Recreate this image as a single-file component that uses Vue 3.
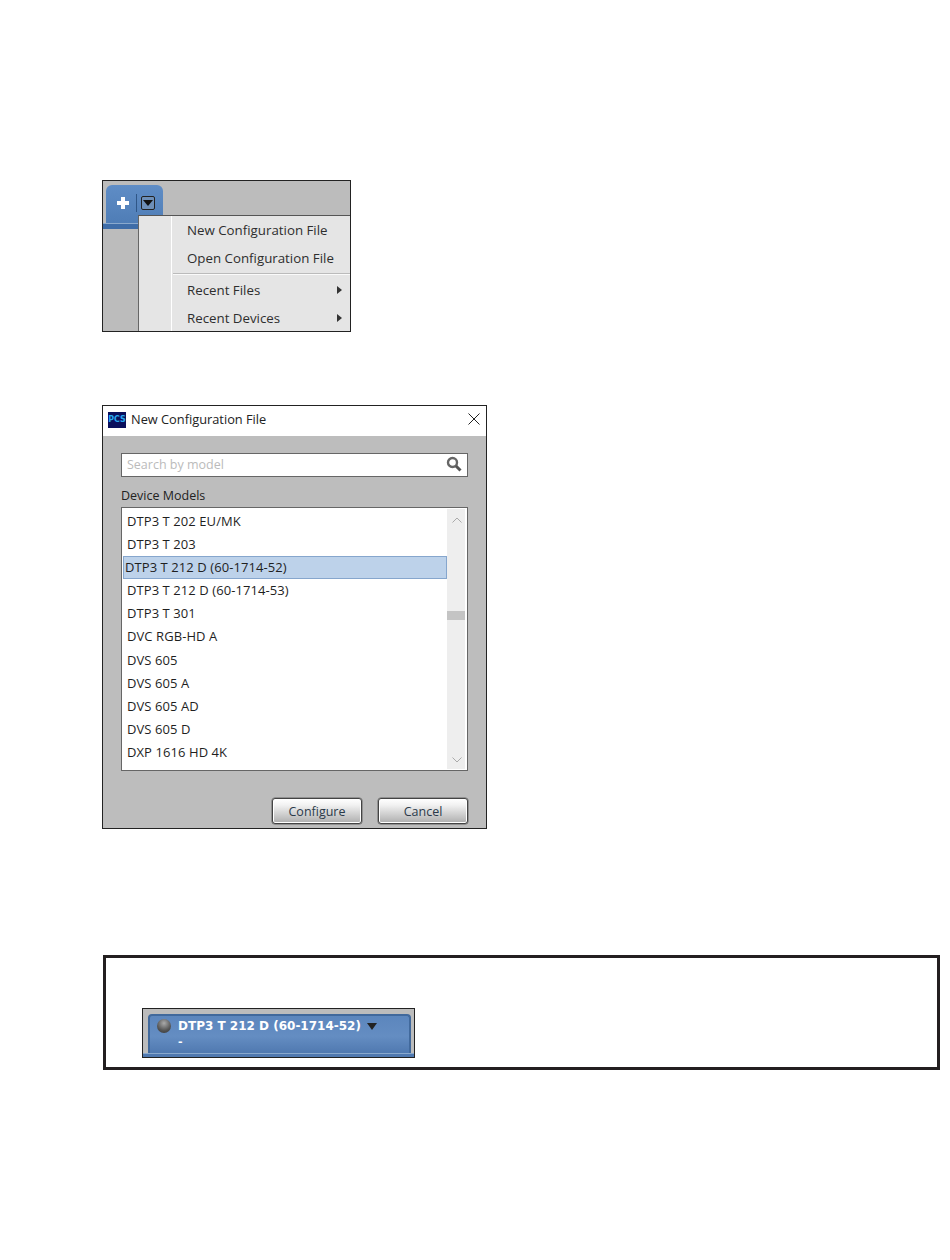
<template>
  <div class="page">
    <!-- add menu -->
    <div class="shot menu-shot">
      <div class="tab">
        <span class="plus"></span>
        <span class="tab-sep"></span>
        <span class="drop-btn"><i class="tri"></i></span>
      </div>
      <div class="tab-line"></div>
      <div class="menu">
        <div class="menu-item">New Configuration File</div>
        <div class="menu-item">Open Configuration File</div>
        <div class="menu-sep"></div>
        <div class="menu-item sub">Recent Files<i class="arrow"></i></div>
        <div class="menu-item sub">Recent Devices<i class="arrow"></i></div>
      </div>
    </div>

    <!-- dialog -->
    <div class="dialog">
      <div class="title-bar">
        <span class="pcs">PCS</span>
        <span class="title">New Configuration File</span>
        <svg class="close" width="12" height="12" viewBox="0 0 12 12">
          <path d="M.5.5l11 11M11.5.5l-11 11" stroke="#222" fill="none" />
        </svg>
      </div>
      <div class="dialog-body">
        <div class="search">
          <span class="placeholder">Search by model</span>
          <svg class="glass" width="16" height="16" viewBox="0 0 16 16">
            <circle cx="6.5" cy="6.5" r="4.5" fill="#fff" stroke="#666" stroke-width="2.4" />
            <path d="M10 10l4.5 4.5" stroke="#555" stroke-width="3" />
          </svg>
        </div>
        <div class="label">Device Models</div>
        <div class="list">
          <div class="rows">
            <div v-for="m in models" :key="m.name" class="row" :class="{ selected: m.selected }">{{ m.name }}</div>
          </div>
          <div class="scrollbar">
            <svg class="chev" width="10" height="6" viewBox="0 0 10 6">
              <path d="M.5 5.500L5 1l4.500 4.500" stroke="#aaa" fill="none" />
            </svg>
            <div class="thumb"></div>
            <svg class="chev" width="10" height="6" viewBox="0 0 10 6">
              <path d="M.5.5L5 5 9.500.5" stroke="#aaa" fill="none" />
            </svg>
          </div>
        </div>
        <div class="buttons">
          <button class="btn">Configure</button>
          <button class="btn">Cancel</button>
        </div>
      </div>
    </div>

    <!-- note box -->
    <div class="note">
      <div class="strip">
        <div class="device-tab">
          <div class="device-line">
            <span class="led"></span>
            <span class="device-name">DTP3 T 212 D (60-1714-52)</span>
            <i class="device-tri"></i>
          </div>
          <div class="device-sub">-</div>
        </div>
        <div class="device-bar"></div>
      </div>
    </div>
  </div>
</template>

<script setup>
const models = [
  { name: 'DTP3 T 202 EU/MK' },
  { name: 'DTP3 T 203' },
  { name: 'DTP3 T 212 D (60-1714-52)', selected: true },
  { name: 'DTP3 T 212 D (60-1714-53)' },
  { name: 'DTP3 T 301' },
  { name: 'DVC RGB-HD A' },
  { name: 'DVS 605' },
  { name: 'DVS 605 A' },
  { name: 'DVS 605 AD' },
  { name: 'DVS 605 D' },
  { name: 'DXP 1616 HD 4K' },
]
</script>

<style>
html, body {
  background: #fff;
}
</style>

<style scoped>
.page {
  width: 950px;
  height: 1260px;
  box-sizing: border-box;
  padding: 180px 0 0 102px;
  font-family: "Open Sans", "Liberation Sans", sans-serif;
  color: #222;
  overflow: hidden;
}

/* add menu */
.shot {
  position: relative;
  box-sizing: border-box;
  border: 1px solid #222;
  background: #bcbcbc;
}
.menu-shot {
  width: 249px;
  height: 152px;
  overflow: hidden;
}
.tab {
  width: 57px;
  height: 38px;
  margin: 4px 0 0 3px;
  box-sizing: border-box;
  padding: 0 0 3px 0;
  border-radius: 6px 6px 0 0;
  background: linear-gradient(#5f8dc6, #4f7db6);
  display: flex;
  align-items: center;
}
.plus {
  width: 12px;
  height: 12px;
  margin-left: 11px;
  background:
    linear-gradient(#fff, #fff) center / 12px 4px no-repeat,
    linear-gradient(#fff, #fff) center / 4px 12px no-repeat;
}
.tab-sep {
  width: 1px;
  height: 18px;
  margin-left: 7px;
  background: #2f5687;
}
.drop-btn {
  width: 14px;
  height: 14px;
  margin-left: 4px;
  box-sizing: border-box;
  border: 1px solid #222;
  border-radius: 2px;
  background: #6d8fb8;
  display: flex;
  align-items: center;
  justify-content: center;
}
.tri {
  border-style: solid;
  border-width: 6px 5px 0;
  border-color: #111 transparent transparent;
}
.tab-line {
  height: 6px;
  box-sizing: border-box;
  border-top: 1px solid #8aa9cd;
  background: #3f6da8;
}
.menu {
  position: absolute;
  left: 35px;
  top: 34px;
  width: 213px;
  height: 120px;
  box-sizing: border-box;
  border-top: 1px solid #555;
  border-left: 1px solid #666;
  padding: 0 0 0 33px;
  background: linear-gradient(90deg, #e5e5e5 32px, #fff 32px, #fff 33px, #e5e5e5 33px);
  font-size: 13.3px;
}
.menu-item {
  position: relative;
  height: 28px;
  line-height: 28px;
  padding-left: 15px;
  color: #2e2e2e;
}
.menu-sep {
  height: 2px;
  margin: 1px 0 1px 1px;
  background: #fafafa;
  border-top: 1px solid #bbb;
  box-sizing: border-box;
}
.arrow {
  position: absolute;
  right: 9px;
  top: 10px;
  border-style: solid;
  border-width: 4px 0 4px 5px;
  border-color: transparent transparent transparent #333;
}

/* dialog */
.dialog {
  width: 385px;
  height: 424px;
  margin-top: 73px;
  box-sizing: border-box;
  border: 1px solid #222;
  background: #bdbdbd;
  display: flex;
  flex-direction: column;
}
.title-bar {
  height: 30px;
  flex: none;
  box-sizing: border-box;
  background: #fff;
  display: flex;
  align-items: center;
  padding: 0 5px 3px;
}
.pcs {
  width: 18px;
  height: 16px;
  background: #0a0f5c;
  color: #29a8f0;
  font: bold 8px/16px "DejaVu Sans", sans-serif;
  text-align: center;
}
.title {
  margin: 0 0 2px 5px;
  font-size: 12.8px;
  color: #222;
}
.close {
  margin: 0 1px 2px auto;
}
.dialog-body {
  flex: 1;
  padding: 17px 18px 0;
  display: flex;
  flex-direction: column;
}
.search {
  height: 24px;
  box-sizing: border-box;
  border: 1px solid #666;
  background: #fff;
  display: flex;
  align-items: center;
  justify-content: space-between;
  padding: 0 5px 2px 5px;
  font-size: 12.5px;
  color: #bbb;
}
.label {
  height: 30px;
  line-height: 37px;
  font-size: 12.5px;
  color: #222;
}
.list {
  height: 264px;
  box-sizing: border-box;
  border: 1px solid #666;
  background: #fff;
  display: flex;
  padding: 1px 2px 1px 1px;
}
.rows {
  flex: 1;
  padding-top: 1px;
}
.row {
  height: 23.1px;
  line-height: 23px;
  padding-left: 4px;
  font-size: 13px;
  letter-spacing: 0.08px;
  color: #1f1f1f;
  box-sizing: border-box;
}
.row.selected {
  background: #bdd2ea;
  outline: 1px solid #86a6cd;
  outline-offset: -1px;
  padding-left: 2px;
}
.scrollbar {
  position: relative;
  width: 18px;
  background: #eee;
}
.chev {
  position: absolute;
  left: 5px;
  top: 8px;
}
.chev:last-child {
  top: auto;
  bottom: 6px;
}
.thumb {
  position: absolute;
  left: 0;
  right: 0;
  top: 102px;
  height: 9px;
  background: #c4c4c4;
}
.buttons {
  display: flex;
  justify-content: flex-end;
  gap: 16px;
  margin-top: 27px;
}
.btn {
  width: 90px;
  height: 26px;
  padding: 0;
  border: 1px solid #444;
  border-radius: 3px;
  background: linear-gradient(#fff, #f2f2f2 25%, #aeaeae);
  box-shadow: inset 0 0 0 1px #fff, 0 0 0 0.5px #666;
  font-family: inherit;
  font-size: 12.5px;
  color: #2b3a4a;
}

/* note box */
.note {
  width: 837px;
  height: 115px;
  margin: 126px 0 0 1px;
  box-sizing: border-box;
  border: 3px solid #231f20;
  padding: 50px 0 0 36px;
  background: #fff;
}
.strip {
  width: 273px;
  height: 50px;
  box-sizing: border-box;
  border: 1px solid #222;
  background: #bcbcbc;
  padding-top: 5px;
}
.device-tab {
  height: 39px;
  margin: 0 3px 0 5px;
  box-sizing: border-box;
  border: 2px solid #41699c;
  border-bottom: none;
  border-radius: 4px 4px 0 0;
  background: linear-gradient(#5c86bd, #648dc2 55%, #5079b0);
  padding: 0 0 0 7px;
}
.device-line {
  display: flex;
  align-items: center;
  height: 20px;
}
.led {
  width: 14px;
  height: 14px;
  border-radius: 50%;
  background: radial-gradient(circle at 50% 30%, #aaa, #555 60%, #333);
}
.device-name {
  margin-left: 7px;
  font: bold 12px "DejaVu Sans", sans-serif;
  color: #fff;
  white-space: nowrap;
}
.device-tri {
  margin-left: 6px;
  border-style: solid;
  border-width: 7px 5px 0;
  border-color: #222 transparent transparent;
}
.device-sub {
  margin-left: 21px;
  padding-top: 1px;
  font: bold 11px/10px "DejaVu Sans", sans-serif;
  color: #fff;
}
.device-bar {
  height: 4px;
  box-sizing: border-box;
  border-top: 1px solid #8aa9cd;
  background: #5079b0;
}
</style>
